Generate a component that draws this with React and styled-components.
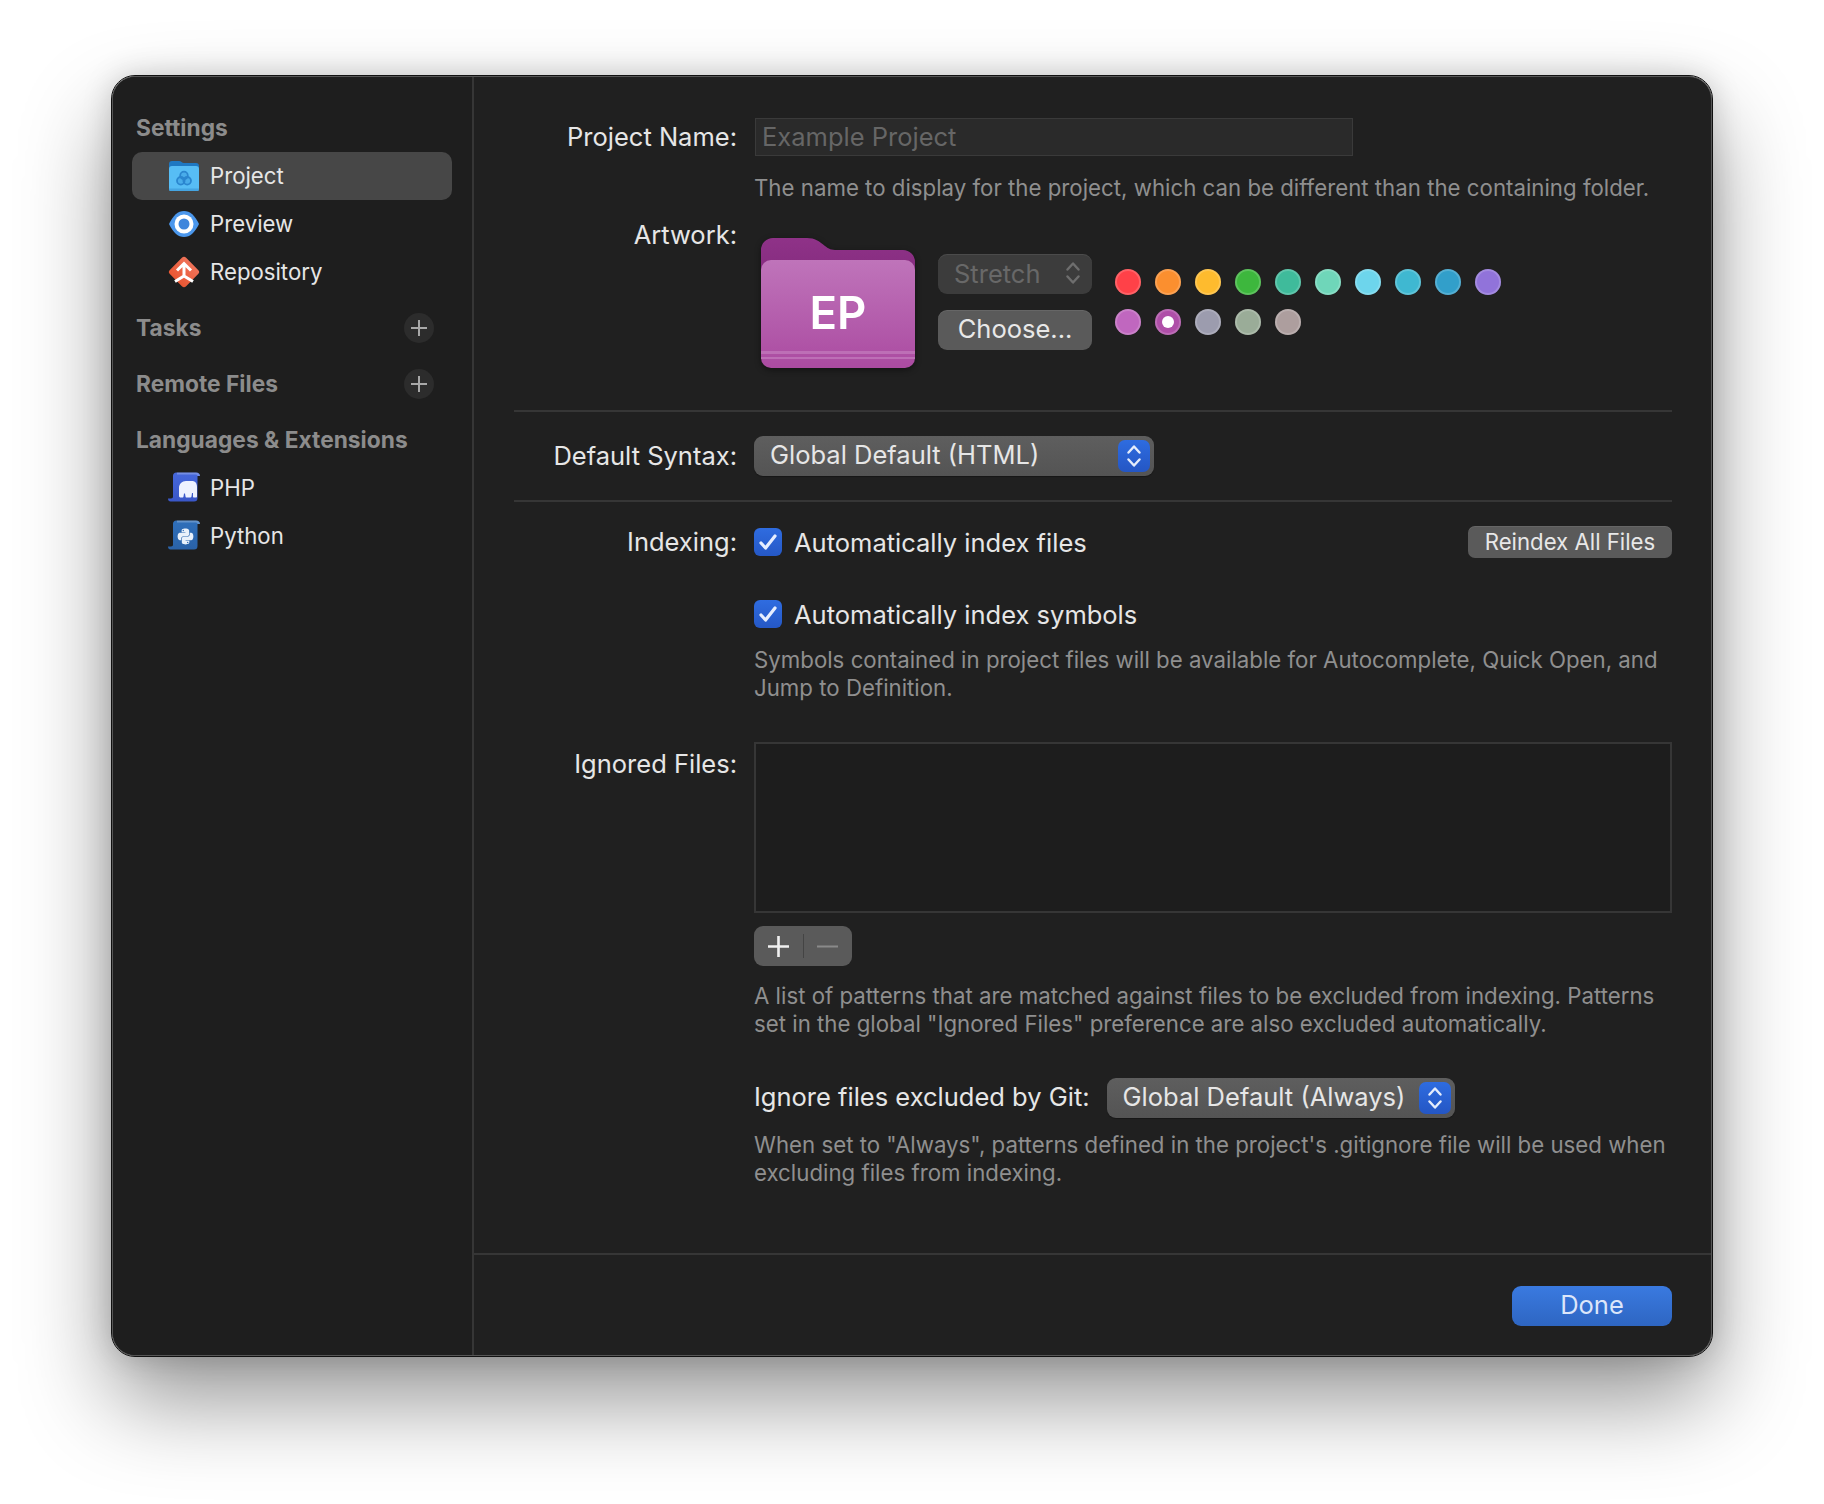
import React from "react";
import styled, { createGlobalStyle } from "styled-components";
import { FaPython } from "react-icons/fa";

const Global = createGlobalStyle`
  html, body { margin: 0; padding: 0; background: #fff; }
  body { font-family: Inter, "Liberation Sans", sans-serif; }
  * { box-sizing: border-box; }
`;

const Page = styled.div`
  width: 1824px;
  height: 1504px;
  padding: 76px 112px 0;
  overflow: hidden;
`;
const Window = styled.div`
  display: flex;
  width: 1600px;
  height: 1280px;
  background: #202020;
  border: 1px solid #565656;
  border-radius: 23px;
  outline: 1px solid #111;
  outline-offset: 0;
  box-shadow: 0 44px 90px rgba(0, 0, 0, 0.42), 0 0 30px rgba(0, 0, 0, 0.18);
  overflow: hidden;
`;
const Sidebar = styled.aside`
  width: 361px;
  flex: none;
  padding: 27px 20px 0 19px;
  background: #1e1e1e;
  border-right: 2px solid #363636;
`;
const Section = styled.div`
  margin-bottom: 8px;
`;
const SectionHead = styled.div`
  display: flex;
  align-items: center;
  justify-content: space-between;
  height: 48px;
  padding: 0 18px 2px 4px;
  font-size: 22.75px;
  font-weight: 700;
  color: #8c8c8c;
`;
const AddRound = styled.span`
  display: flex;
  align-items: center;
  justify-content: center;
  width: 30px;
  height: 30px;
  margin-top: 2px;
  border-radius: 50%;
  background: #2c2c2c;
`;
const NavItem = styled.div`
  display: flex;
  align-items: center;
  gap: 10px;
  height: 48px;
  padding: 0 0 2px 36px;
  border-radius: 10px;
  font-size: 22.2px;
  color: #e6e6e6;
  background: ${(p) => (p.$active ? "#474747" : "transparent")};
`;
const NavIcon = styled.svg`
  width: 32px;
  height: 32px;
  margin-top: 2px;
  flex: none;
`;

const Main = styled.main`
  flex: 1;
  display: flex;
  flex-direction: column;
  min-width: 0;
`;
const Content = styled.div`
  flex: 1;
  padding: 41px 39px 0 40px;
`;
const Row = styled.div`
  display: grid;
  grid-template-columns: 223px 1fr;
  column-gap: 17px;
  margin-top: ${(p) => p.$mt || 0}px;
  align-items: ${(p) => p.$align || "start"};
`;
const Label = styled.label`
  text-align: right;
  font-size: 25.5px;
  line-height: 28px;
  color: #e6e6e6;
  padding-top: ${(p) => p.$pt || 0}px;
`;
const TextInput = styled.div`
  height: 38px;
  width: 598px;
  margin-left: 1px;
  padding: 0 6px;
  background: #2a2a2a;
  border: 1px solid #3a3a3a;
  font-size: 25.5px;
  line-height: 35px;
  color: #666;
`;
const Desc = styled.p`
  margin: ${(p) => p.$mt || 0}px 0 0;
  font-size: 22.25px;
  line-height: 28px;
  color: #8f8f8f;
`;
const Artwork = styled.div`
  display: flex;
  align-items: flex-start;
`;
const FolderWrap = styled.div`
  position: relative;
  width: 154px;
  height: 130px;
  margin: 17px 0 0 7px;
  flex: none;
  filter: drop-shadow(0 2px 3px rgba(0, 0, 0, 0.45));
`;
const FolderSvg = styled.svg`
  display: block;
  width: 154px;
  height: 130px;
`;
const FolderBadge = styled.span`
  position: absolute;
  left: 0;
  right: 0;
  top: 48px;
  text-align: center;
  font-size: 45.5px;
  line-height: 54px;
  font-weight: 600;
  color: #fff;
`;
const ArtControls = styled.div`
  display: flex;
  flex-direction: column;
  gap: 16px;
  width: 154px;
  margin: 33px 0 0 23px;
  flex: none;
`;
const MacButton = styled.div`
  display: flex;
  align-items: center;
  justify-content: center;
  height: 40px;
  padding-bottom: 3px;
  border-radius: 9px;
  background: ${(p) => (p.$dim ? "#3c3c3c" : "#5a5a5a")};
  color: ${(p) => (p.$dim ? "#686868" : "#e8e8e8")};
  font-size: 25.5px;
  box-shadow: inset 0 1px 0 rgba(255, 255, 255, 0.08);
`;
const DimSelect = styled(MacButton)`
  justify-content: space-between;
  padding: 0 12px 2px 16px;
`;
const Swatches = styled.div`
  display: grid;
  grid-template-columns: repeat(10, 26px);
  column-gap: 14px;
  row-gap: 14px;
  margin: 48px 0 0 23px;
`;
const Swatch = styled.span`
  display: flex;
  align-items: center;
  justify-content: center;
  width: 26px;
  height: 26px;
  border-radius: 50%;
  background: ${(p) => p.$c};
  box-shadow: inset 0 0 0 2px rgba(255, 255, 255, 0.17);
`;
const SwatchDot = styled.span`
  width: 12px;
  height: 12px;
  border-radius: 50%;
  background: #fff;
`;
const Rule = styled.hr`
  height: 2px;
  margin: ${(p) => p.$mt}px 0 0;
  border: 0;
  background: #363636;
`;
const SelectBox = styled.div`
  display: flex;
  align-items: center;
  justify-content: space-between;
  width: ${(p) => p.$w}px;
  height: 40px;
  padding: 0 4px 0 16px;
  border-radius: 9px;
  background: linear-gradient(#5e5e5e, #545454);
  color: #e6e6e6;
  font-size: 25.5px;
  box-shadow: 0 1px 1px rgba(0, 0, 0, 0.3);
`;
const SelectText = styled.span`
  padding-bottom: 3px;
`;
const Stepper = styled.span`
  display: flex;
  align-items: center;
  justify-content: center;
  width: 32px;
  height: 32px;
  border-radius: 7px;
  background: linear-gradient(#2e6ce0, #2456c4);
`;
const CheckLine = styled.div`
  display: flex;
  align-items: center;
  justify-content: space-between;
  height: 28px;
`;
const CheckLabel = styled.span`
  display: flex;
  align-items: center;
  gap: 12px;
  font-size: 25.5px;
  color: #e6e6e6;
`;
const CheckBox = styled.span`
  display: flex;
  align-items: center;
  justify-content: center;
  width: 28px;
  height: 28px;
  border-radius: 6px;
  background: linear-gradient(#2f6ce0, #2558c6);
`;
const SmallButton = styled(MacButton)`
  width: 204px;
  height: 32px;
  padding-bottom: 2px;
  border-radius: 7px;
  font-size: 22.2px;
`;
const ListBox = styled.div`
  height: 171px;
  background: #1d1d1d;
  border: 2px solid #363636;
`;
const PlusMinus = styled.div`
  display: flex;
  align-items: center;
  width: 98px;
  height: 40px;
  margin-top: 13px;
  border-radius: 9px;
  background: #5a5a5a;
`;
const PmCell = styled.span`
  display: flex;
  align-items: center;
  justify-content: center;
  flex: 1;
`;
const PmSep = styled.span`
  width: 1px;
  height: 24px;
  background: #444;
`;
const GitRow = styled.div`
  display: flex;
  align-items: center;
  gap: 17px;
  margin-top: 40px;
  font-size: 25.5px;
  color: #e6e6e6;
`;
const GitLabel = styled.span`
  padding-bottom: 4px;
`;
const Footer = styled.footer`
  display: flex;
  justify-content: flex-end;
  height: 102px;
  padding: 31px 39px 0 0;
  border-top: 2px solid #363636;
`;
const Primary = styled.div`
  display: flex;
  align-items: center;
  justify-content: center;
  width: 160px;
  height: 40px;
  padding-bottom: 3px;
  border-radius: 9px;
  background: linear-gradient(#3a7ae0, #2e66c2);
  color: #dce6fa;
  font-size: 25.5px;
`;

const Plus = ({ s = 16, c = "#a8a8a8", w = 2 }) => (
  <svg width={s} height={s} viewBox="0 0 16 16">
    <path d="M8 0v16M0 8h16" stroke={c} strokeWidth={w} fill="none" />
  </svg>
);
const Chevrons = ({ c = "#e4ecfb", w = 14, h = 24, sw = 2.4 }) => (
  <svg width={w} height={h} viewBox="0 0 14 24">
    <path d="M1.5 8.5 7 2.5l5.5 6M1.5 15.5 7 21.5l5.5-6" stroke={c} strokeWidth={sw} fill="none" strokeLinecap="round" strokeLinejoin="round" />
  </svg>
);
const Check = () => (
  <svg width="18" height="16" viewBox="0 0 18 16">
    <path d="M2 9l4.6 5L16 2" stroke="#e6eeff" strokeWidth="3.2" fill="none" strokeLinecap="round" strokeLinejoin="round" />
  </svg>
);

const ProjectIcon = () => (
  <NavIcon viewBox="0 0 32 32">
    <path d="M1 4a3 3 0 0 1 3-3h7c2 0 3 2 5 2h12a3 3 0 0 1 3 3v8H1z" fill="#1f78c2" />
    <rect x="1" y="6" width="30" height="25" rx="3" fill="#57bdf5" />
    <rect x="1" y="28.500" width="30" height="2.500" rx="1.250" fill="#45a5e2" />
    <g fill="rgba(42,134,207,0.3)" stroke="#2a86cf" strokeWidth="1.800">
      <circle cx="16" cy="15.500" r="3.800" />
      <circle cx="12.800" cy="20.800" r="3.800" />
      <circle cx="19.200" cy="20.800" r="3.800" />
    </g>
  </NavIcon>
);
const EyeIcon = () => (
  <NavIcon viewBox="0 0 32 32">
    <path d="M1 16C5 7.500 10 3 16 3s11 4.500 15 13c-4 8.500-9 13-15 13S5 24.500 1 16z" fill="#4b97ec" />
    <circle cx="16" cy="16" r="9.500" fill="#fff" />
    <circle cx="16" cy="16" r="5.500" fill="#3f86dc" />
  </NavIcon>
);
const RepoIcon = () => (
  <NavIcon viewBox="0 0 32 32">
    <defs>
      <linearGradient id="rg" x1="0" y1="0" x2="0" y2="1">
        <stop offset="0" stopColor="#ef7258" />
        <stop offset="1" stopColor="#e85733" />
      </linearGradient>
    </defs>
    <rect x="4.500" y="4.500" width="23" height="23" rx="3" transform="rotate(45 16 16)" fill="url(#rg)" />
    <path d="M16 8v13M9 14.500 16 7.500l7 7M7 25.500l9-5.500 9 5.500" stroke="#fff" strokeWidth="3" fill="none" />
  </NavIcon>
);
const Scroll = ({ c1, c2, id, children }) => (
  <NavIcon viewBox="0 0 32 32">
    <defs>
      <linearGradient id={id} x1="0" y1="0" x2="0" y2="1">
        <stop offset="0" stopColor={c1} />
        <stop offset="1" stopColor={c2} />
      </linearGradient>
    </defs>
    <path d="M5 4a3.500 3.500 0 0 1 3.500-3.500H28c2.500 0 4 1.500 4 3.500h-2.500V26a3.500 3.500 0 0 1-3.500 3.500H2.500C1 29.500 0 28.500 0 26.500h3c1.500 0 2-.8 2-2z" fill={`url(#${id})`} />
    <path d="M9 .5H28c2.500 0 4 1.500 4 3.500h-2.500c0-1-1-1.500-2-1.500H9z" fill="#ffffff" opacity="0.25" />
    {children}
  </NavIcon>
);
const PhpIcon = () => (
  <Scroll c1="#4668dc" c2="#3a57c8" id="ph">
    <path d="M11 25v-9c0-4 3-7 7-7h6c3 0 5 2 5 6v9.500c0 .6-.5 1-1 1h-2c-.6 0-1-.4-1-1v-3.500h-1l-.5 3.500c-.2.6-.5 1-1 1h-4c-.6 0-1-.5-1-1l-.5-3h-1l-.5 3c0 .6-.5 1-1 1h-2c-.6 0-1-.4-1-1z" fill="#eef2ff" />
  </Scroll>
);
const PyIcon = () => (
  <Scroll c1="#2f6fba" c2="#2a62a8" id="py">
    <FaPython x="8.500" y="7.500" size={18} color="#e9f1fb" />
  </Scroll>
);

const Folder = () => (
  <FolderSvg viewBox="0 0 154 130">
    <defs>
      <linearGradient id="fb" x1="0" y1="0" x2="0" y2="1">
        <stop offset="0" stopColor="#8f3288" />
        <stop offset="1" stopColor="#7e2878" />
      </linearGradient>
      <linearGradient id="ff" x1="0" y1="0" x2="0" y2="1">
        <stop offset="0" stopColor="#bf74ba" />
        <stop offset="1" stopColor="#ab4ba1" />
      </linearGradient>
    </defs>
    <path d="M0 12A12 12 0 0 1 12 0h34c8 0 12 3 18 8 4 3 6 4 12 4h66a12 12 0 0 1 12 12v40H0z" fill="url(#fb)" />
    <rect x="0" y="22" width="154" height="108" rx="10" fill="url(#ff)" />
    <rect x="0" y="113" width="154" height="3" fill="#bd6fb6" />
    <rect x="0" y="119" width="154" height="2" fill="#bd6fb6" />
  </FolderSvg>
);

const colors = ["#ff4148", "#fb8f2f", "#febb2e", "#3db73d", "#3fbb9b", "#6fd6b9", "#6dd5ec", "#3fb8d1", "#329fca", "#9173da", "#c067bf", "#af4fa8", "#9c9cae", "#9aac98", "#ad9e9e"];

export default function App() {
  return (
    <Page>
      <Global />
      <Window>
        <Sidebar>
          <Section>
            <SectionHead>Settings</SectionHead>
            <NavItem $active><ProjectIcon />Project</NavItem>
            <NavItem><EyeIcon />Preview</NavItem>
            <NavItem><RepoIcon />Repository</NavItem>
          </Section>
          <Section>
            <SectionHead>Tasks<AddRound><Plus /></AddRound></SectionHead>
          </Section>
          <Section>
            <SectionHead>Remote Files<AddRound><Plus /></AddRound></SectionHead>
          </Section>
          <Section>
            <SectionHead>Languages &amp; Extensions</SectionHead>
            <NavItem><PhpIcon />PHP</NavItem>
            <NavItem><PyIcon />Python</NavItem>
          </Section>
        </Sidebar>
        <Main>
          <Content>
            <Row $align="center">
              <Label>Project Name:</Label>
              <TextInput>Example Project</TextInput>
            </Row>
            <Row>
              <span />
              <Desc $mt={18}>The name to display for the project, which can be different than the containing folder.</Desc>
            </Row>
            <Row $mt={19}>
              <Label>Artwork:</Label>
              <Artwork>
                <FolderWrap>
                  <Folder />
                  <FolderBadge>EP</FolderBadge>
                </FolderWrap>
                <ArtControls>
                  <DimSelect $dim>Stretch<Chevrons c="#6e6e6e" /></DimSelect>
                  <MacButton>Choose...</MacButton>
                </ArtControls>
                <Swatches>
                  {colors.map((c, i) => (
                    <Swatch key={c} $c={c}>{i === 11 && <SwatchDot />}</Swatch>
                  ))}
                </Swatches>
              </Artwork>
            </Row>
            <Rule $mt={42} />
            <Row $mt={24} $align="center">
              <Label>Default Syntax:</Label>
              <SelectBox $w={400}><SelectText>Global Default (HTML)</SelectText><Stepper><Chevrons /></Stepper></SelectBox>
            </Row>
            <Rule $mt={24} />
            <Row $mt={26}>
              <Label>Indexing:</Label>
              <CheckLine>
                <CheckLabel><CheckBox><Check /></CheckBox>Automatically index files</CheckLabel>
                <SmallButton>Reindex All Files</SmallButton>
              </CheckLine>
            </Row>
            <Row $mt={44}>
              <span />
              <div>
                <CheckLine>
                  <CheckLabel><CheckBox><Check /></CheckBox>Automatically index symbols</CheckLabel>
                </CheckLine>
                <Desc $mt={18}>Symbols contained in project files will be available for Autocomplete, Quick Open, and<br />Jump to Definition.</Desc>
              </div>
            </Row>
            <Row $mt={40}>
              <Label $pt={8}>Ignored Files:</Label>
              <div>
                <ListBox />
                <PlusMinus>
                  <PmCell><Plus s={21} c="#f0f0f0" /></PmCell>
                  <PmSep />
                  <PmCell><svg width="21" height="3" viewBox="0 0 21 3"><path d="M0 1.500h21" stroke="#8a8a8a" strokeWidth="2" /></svg></PmCell>
                </PlusMinus>
                <Desc $mt={16}>A list of patterns that are matched against files to be excluded from indexing. Patterns<br />set in the global "Ignored Files" preference are also excluded automatically.</Desc>
                <GitRow>
                  <GitLabel>Ignore files excluded by Git:</GitLabel>
                  <SelectBox $w={348}><SelectText>Global Default (Always)</SelectText><Stepper><Chevrons /></Stepper></SelectBox>
                </GitRow>
                <Desc $mt={13}>When set to "Always", patterns defined in the project's .gitignore file will be used when<br />excluding files from indexing.</Desc>
              </div>
            </Row>
          </Content>
          <Footer>
            <Primary>Done</Primary>
          </Footer>
        </Main>
      </Window>
    </Page>
  );
}
